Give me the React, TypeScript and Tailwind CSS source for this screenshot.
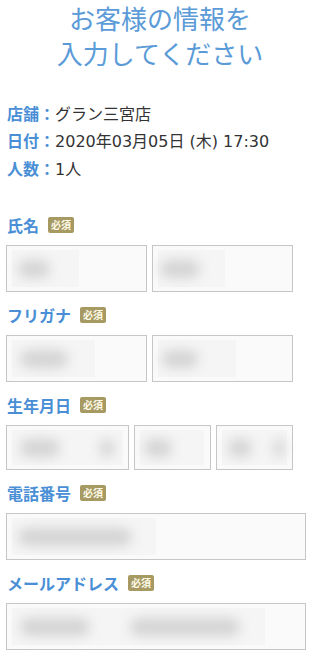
import type { ReactNode } from 'react';

const font = { fontFamily: '"Noto Sans CJK JP", "Noto Sans", sans-serif' };
const valueFont = { fontFamily: '"DejaVu Sans", "Noto Sans CJK JP", sans-serif' };

interface Blob {
  ml: string;
  w: string;
}

function Badge() {
  return (
    <span className="ml-[9px] inline-flex h-[16px] w-[26px] items-center justify-center rounded-[2px] bg-[#a69a62] text-[10px] font-bold leading-none text-[#fffbe8]">
      必須
    </span>
  );
}

function Label({ children }: { children: ReactNode }) {
  return (
    <div className="mt-[13px] flex h-[20px] items-center pl-[7px]">
      <span className="text-[16px] font-bold leading-none text-[#4a8fd6]">{children}</span>
      <Badge />
    </div>
  );
}

function Field({ className, inner, blobs }: { className: string; inner: string; blobs: Blob[] }) {
  return (
    <div className={`flex items-stretch border border-[#c6c6c6] bg-[#fafafa] px-[5px] py-[4px] ${className}`}>
      <div className={`flex h-full items-center bg-[#f5f5f5] ${inner}`}>
        {blobs.map((b, i) => (
          <div key={i} className={`h-[18px] rounded-full bg-[#d4d4d4] blur-[6px] ${b.ml} ${b.w}`} />
        ))}
      </div>
    </div>
  );
}

export default function App() {
  return (
    <div className="min-h-[656px] w-[320px] bg-white text-[#333]" style={font}>
      <h1 className="text-center text-[26px] font-normal leading-[35px] text-[#5b9bd8]">
        お客様の情報を
        <br />
        入力してください
      </h1>

      <div className="mt-[30px] pl-[7px] text-[16px] leading-[27px]">
        <p>
          <span className="font-bold text-[#4a8fd6]">店舗：</span>グラン三宮店
        </p>
        <p>
          <span className="font-bold text-[#4a8fd6]">日付：</span>
          <span className="text-[16px]" style={valueFont}>
            2020年03月05日 (木) 17:30
          </span>
        </p>
        <p>
          <span className="font-bold text-[#4a8fd6]">人数：</span>
          <span className="text-[16px]" style={valueFont}>
            1人
          </span>
        </p>
      </div>

      <div className="mt-[32px]">
        <Label>氏名</Label>
        <div className="mt-[10px] flex gap-[5px] pl-[6px]">
          <Field className="h-[47px] w-[141px]" inner="w-[67px]" blobs={[{ ml: 'ml-[6px]', w: 'w-[32px]' }]} />
          <Field className="h-[47px] w-[141px]" inner="w-[67px]" blobs={[{ ml: 'ml-[2px]', w: 'w-[40px]' }]} />
        </div>

        <Label>フリガナ</Label>
        <div className="mt-[10px] flex gap-[5px] pl-[6px]">
          <Field className="h-[47px] w-[141px]" inner="w-[83px]" blobs={[{ ml: 'ml-[8px]', w: 'w-[48px]' }]} />
          <Field className="h-[47px] w-[141px]" inner="w-[78px]" blobs={[{ ml: 'ml-[4px]', w: 'w-[36px]' }]} />
        </div>

        <Label>生年月日</Label>
        <div className="mt-[10px] flex gap-[5px] pl-[6px]">
          <Field
            className="h-[45px] w-[123px]"
            inner="w-[112px]"
            blobs={[
              { ml: 'ml-[8px]', w: 'w-[40px]' },
              { ml: 'ml-[40px]', w: 'w-[14px]' },
            ]}
          />
          <Field className="h-[45px] w-[77px]" inner="w-[64px]" blobs={[{ ml: 'ml-[4px]', w: 'w-[28px]' }]} />
          <Field
            className="h-[45px] w-[77px]"
            inner="w-[66px]"
            blobs={[
              { ml: 'ml-[6px]', w: 'w-[24px]' },
              { ml: 'ml-[22px]', w: 'w-[10px]' },
            ]}
          />
        </div>

        <Label>電話番号</Label>
        <div className="mt-[10px] pl-[6px]">
          <Field className="h-[47px] w-[300px]" inner="w-[144px]" blobs={[{ ml: 'ml-[6px]', w: 'w-[114px]' }]} />
        </div>

        <Label>メールアドレス</Label>
        <div className="mt-[10px] pl-[6px]">
          <Field
            className="h-[47px] w-[300px]"
            inner="w-[253px]"
            blobs={[
              { ml: 'ml-[8px]', w: 'w-[70px]' },
              { ml: 'ml-[40px]', w: 'w-[110px]' },
            ]}
          />
        </div>
      </div>
    </div>
  );
}
